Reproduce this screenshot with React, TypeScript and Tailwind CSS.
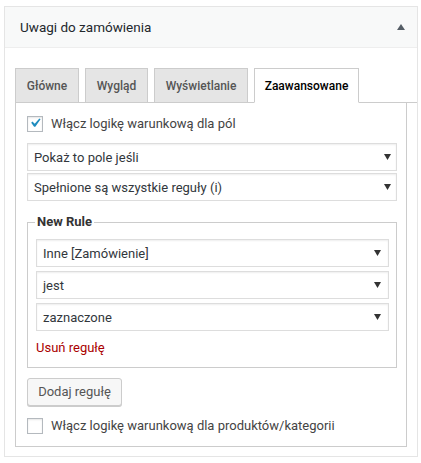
import React from "react";

const font = { fontFamily: 'Roboto, "Noto Sans", sans-serif' };

function Arrow() {
  return (
    <svg width="7" height="6" viewBox="0 0 7 6" className="shrink-0">
      <path d="M0 0 L7 0 L3.5 6 Z" fill="#333" />
    </svg>
  );
}

function Select({ label, inner }: { label: string; inner?: boolean }) {
  return (
    <div
      className={`flex h-[28px] items-center justify-between border border-[#ddd] bg-white shadow-[inset_0_1px_2px_rgba(0,0,0,0.07)] pl-[6px] ${
        inner ? "pr-[7px]" : "pr-[5px]"
      } text-[13px] text-[#32373c]`}
    >
      <span className="leading-none">{label}</span>
      <Arrow />
    </div>
  );
}

function Checkbox({ checked }: { checked?: boolean }) {
  return (
    <div className="relative h-[16px] w-[16px] shrink-0 border border-[#b4b9be] bg-white shadow-[inset_0_1px_2px_rgba(0,0,0,0.1)]">
      {checked && (
        <svg
          width="18"
          height="18"
          viewBox="0 0 20 20"
          className="absolute left-[-2px] top-[-3px]"
        >
          <path
            d="M14.83 4.89l1.34.94-5.81 8.38H9.02L5.78 9.67l1.34-1.25 2.57 2.4z"
            fill="#1e8cbe"
          />
        </svg>
      )}
    </div>
  );
}

const tabs = [
  { name: "Główne", w: "w-[64px]" },
  { name: "Wygląd", w: "w-[63px]" },
  { name: "Wyświetlanie", w: "w-[94px]" },
];

export default function App() {
  return (
    <div className="w-[421px] h-[463px] bg-white pt-[6px] pl-[4px]" style={font}>
      <div className="w-[414px] h-[451px] border border-[#e5e5e5] bg-white flex flex-col">
        <div className="h-[41px] shrink-0 border-b border-[#eee] bg-[#f8f9f9] flex items-center justify-between pl-[15px] pr-[12px]">
          <span className="text-[13.5px] text-[#23282d]">Uwagi do zamówienia</span>
          <svg width="8" height="6" viewBox="0 0 8 6">
            <path d="M0 6 L8 6 L4 0 Z" fill="#555d66" />
          </svg>
        </div>
        <div className="pt-[20px] pl-[10px]">
          <div className="flex gap-[6px] border-b border-[#ccc] h-[35px]">
            {tabs.map((t) => (
              <div
                key={t.name}
                className={`${t.w} h-[35px] border border-[#ccc] bg-[#e5e5e5] flex items-center justify-center text-[12px] font-medium text-[#555]`}
              >
                {t.name}
              </div>
            ))}
            <div className="w-[105px] h-[35px] border border-[#ccc] border-b-white bg-white flex items-center justify-center text-[12px] font-medium text-[#000]">
              Zaawansowane
            </div>
          </div>
          <div className="mr-[10px] h-[344px] border border-t-0 border-[#ccc] pl-[11px] pr-[9px] pt-[13px]">
            <div className="flex items-center gap-[8px] h-[16px]">
              <Checkbox checked />
              <span className="text-[13px] text-[#444]">Włącz logikę warunkową dla pól</span>
            </div>
            <div className="mt-[11px] flex flex-col gap-[2px]">
              <Select label="Pokaż to pole jeśli" />
              <Select label="Spełnione są wszystkie reguły (i)" />
            </div>
            <fieldset className="mt-[11px] border border-[#ccc] pl-[8px] pr-[7px] pb-[9px]">
              <legend className="ml-[-1px] px-[2px] text-[13px] font-bold text-[#333] leading-[20px]">
                New Rule
              </legend>
              <div className="mt-[7px] flex flex-col gap-[4px]">
                <Select label="Inne [Zamówienie]" inner />
                <Select label="jest" inner />
                <Select label="zaznaczone" inner />
              </div>
              <div className="mt-[7px] text-[13px] text-[#a00] leading-[20px]">Usuń regułę</div>
            </fieldset>
            <button className="mt-[10px] h-[28px] w-[95px] rounded-[3px] border border-[#ccc] bg-[#f7f7f7] shadow-[0_1px_0_#ccc] text-[13px] text-[#555]">
              Dodaj regułę
            </button>
            <div className="mt-[12px] flex items-center gap-[8px] h-[16px]">
              <Checkbox />
              <span className="text-[13px] text-[#444]">
                Włącz logikę warunkową dla produktów/kategorii
              </span>
            </div>
          </div>
        </div>
      </div>
    </div>
  );
}
